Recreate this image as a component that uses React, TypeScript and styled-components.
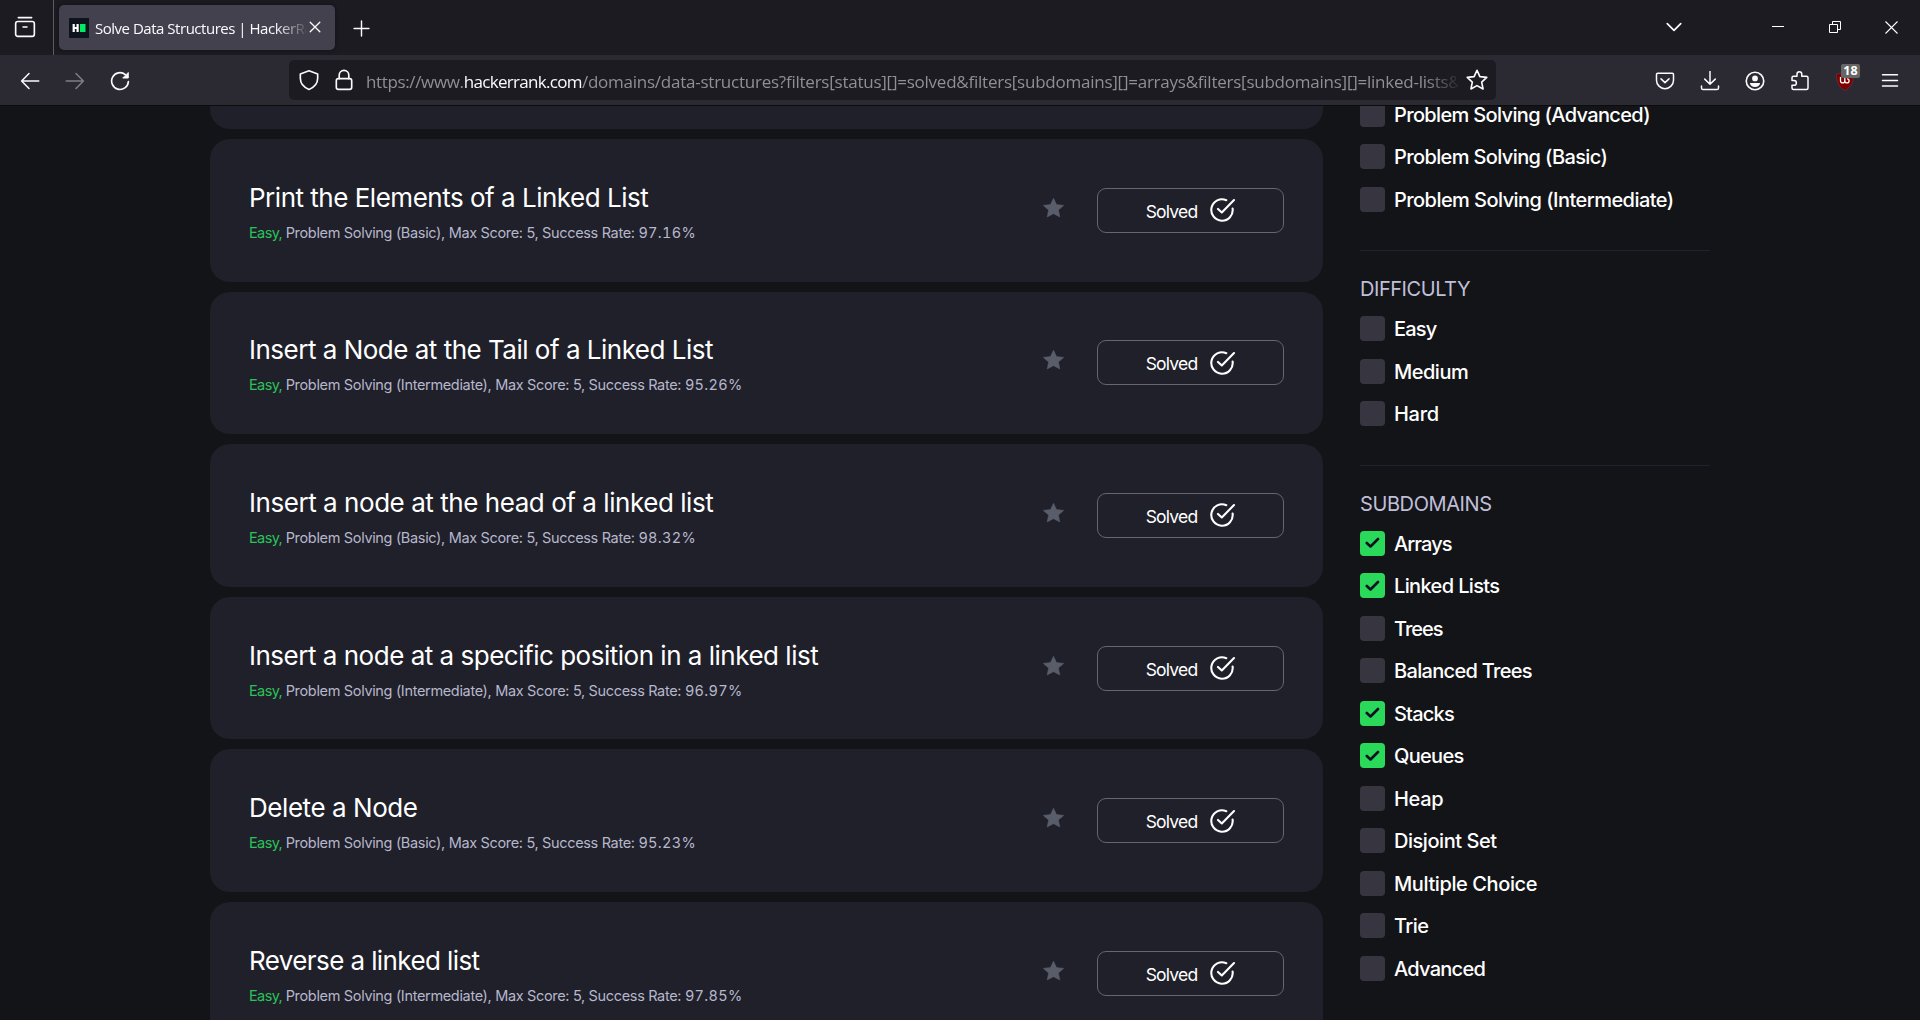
import React from "react";
import styled, { createGlobalStyle } from "styled-components";

const ui = `"Open Sans", "Noto Sans", sans-serif`;
const body = `Inter, "Liberation Sans", sans-serif`;

const GlobalStyle = createGlobalStyle`
  * { box-sizing: border-box; }
  body { margin: 0; background: #131418; overflow: hidden; }
`;

const Window = styled.div`
  width: 1920px;
  height: 1020px;
  display: flex;
  flex-direction: column;
  overflow: hidden;
  background: #131418;
  font-family: ${body};
`;

const TabBar = styled.div`
  height: 55px;
  flex: none;
  display: flex;
  background: #1c1b22;
  color: #fbfbfe;
`;

const ViewButton = styled.div`
  width: 54px;
  height: 55px;
  padding: 16px 0 0 14px;
  border-right: 1px solid #5c5b62;
`;

const Tab = styled.div`
  width: 276px;
  height: 45px;
  margin: 5px 0 0 5px;
  padding-left: 10px;
  display: flex;
  align-items: center;
  border-radius: 5px;
  background: #42414d;
  box-shadow: 0 0 4px rgba(0, 0, 0, 0.45);
`;

const TabTitle = styled.div`
  width: 211px;
  margin-left: 6px;
  overflow: hidden;
  white-space: nowrap;
  font: 400 15px/24px ${ui};
  letter-spacing: -0.48px;
  mask-image: linear-gradient(to right, #000 180px, transparent 214px);
`;

const TabClose = styled.div`
  display: flex;
  margin: -1px 0 0 2px;
`;

const NewTab = styled.div`
  margin: 20px 0 0 18px;
`;

const WindowButtons = styled.div`
  margin-left: auto;
  display: flex;
  align-items: flex-start;
  padding-top: 14px;
`;

const WindowButton = styled.div<{ $w: number }>`
  width: ${(p) => p.$w}px;
  height: 26px;
  display: flex;
  align-items: center;
  justify-content: center;
`;

const Toolbar = styled.div`
  height: 51px;
  flex: none;
  display: flex;
  padding: 0 8px 0 7px;
  background: #2b2a33;
  border-bottom: 1px solid #0c0c0d;
  color: #fbfbfe;
`;

const ToolButton = styled.div<{ $dim?: boolean }>`
  position: relative;
  width: 45px;
  height: 51px;
  display: flex;
  align-items: center;
  justify-content: center;
  opacity: ${(p) => (p.$dim ? 0.4 : 1)};
`;

const Badge = styled.span`
  position: absolute;
  left: 19px;
  top: 9px;
  width: 19px;
  height: 14px;
  border-radius: 2px;
  background: #666;
  color: #fff;
  font: 700 12.5px/13px ${ui};
  text-align: center;
`;

const UrlBar = styled.div`
  width: 1207px;
  height: 40px;
  margin: 5px auto 0 147px;
  padding: 0 8px 0 9px;
  display: flex;
  align-items: center;
  border-radius: 5px;
  background: #1c1b22;
`;

const UrlIcon = styled.div<{ $gap?: number }>`
  display: flex;
  margin-left: ${(p) => p.$gap ?? 0}px;
`;

const UrlText = styled.div`
  width: 1092px;
  margin: 3px 0 0 11px;
  overflow: hidden;
  white-space: nowrap;
  font: 400 17px/26px ${ui};
  letter-spacing: -0.24px;
  color: #8f8f95;
  mask-image: linear-gradient(to right, #000 1060px, transparent 1096px);
`;

const Scheme = styled.span`
  letter-spacing: -0.36px;
`;

const Host = styled.span`
  color: #fbfbfe;
  letter-spacing: -0.68px;
`;

const Page = styled.div`
  flex: 1;
  min-height: 0;
  display: flex;
  overflow: hidden;
`;

const List = styled.div`
  width: 1113px;
  flex: none;
  margin: -119.6px 0 0 210px;
  display: flex;
  flex-direction: column;
  gap: 10px;
`;

const Card = styled.div`
  height: 142.6px;
  flex: none;
  padding: 0 39px;
  display: flex;
  align-items: center;
  border-radius: 20px;
  background: #1f202a;
`;

const CardText = styled.div`
  flex: 1;
  padding-top: 4px;
`;

const CardTitle = styled.div<{ $t: number }>`
  color: #fff;
  font-size: 26px;
  font-weight: 430;
  line-height: 36px;
  letter-spacing: ${(p) => p.$t}px;
`;

const CardMeta = styled.div`
  margin-top: 5px;
  color: #b7b7cc;
  font-size: 14.5px;
  line-height: 24px;
  letter-spacing: -0.335px;
`;

const Level = styled.span`
  color: #2bc25a;
  letter-spacing: -0.6px;
`;

const Rate = styled.span`
  font-variant-numeric: tabular-nums;
  letter-spacing: 0.3px;
`;

const StarSlot = styled.div`
  display: flex;
  margin: -5px 32px 0 0;
`;

const SolvedButton = styled.div`
  width: 187px;
  height: 45px;
  padding-left: 1px;
  display: flex;
  align-items: center;
  justify-content: center;
  gap: 13px;
  border: 1px solid #656573;
  border-radius: 9px;
  color: #fff;
`;

const SolvedLabel = styled.span`
  padding-top: 2px;
  font-size: 17.5px;
  letter-spacing: -0.8px;
`;

const Sidebar = styled.div`
  width: 350px;
  margin: -13.2px 0 0 37px;
  flex: none;
`;

const Group = styled.div`
  padding-bottom: 30px;
  margin-bottom: 20px;
  border-bottom: 1px solid #1d2430;
  &:last-child { border: 0; }
`;

const GroupTitle = styled.div<{ $t: number }>`
  height: 36px;
  color: #c0bfd8;
  font-size: 20px;
  line-height: 36px;
  letter-spacing: ${(p) => p.$t}px;
`;

const Option = styled.div`
  height: 42.5px;
  display: flex;
  align-items: center;
  gap: 9px;
`;

const OptionLabel = styled.span<{ $t: number }>`
  padding-top: 1px;
  color: #fff;
  font-size: 20px;
  font-weight: 500;
  letter-spacing: ${(p) => p.$t}px;
`;

const Box = styled.div<{ $on?: boolean }>`
  width: 25px;
  height: 25px;
  display: flex;
  align-items: center;
  justify-content: center;
  border-radius: 4px;
  background: ${(p) => (p.$on ? "#2bd95a" : "#373640")};
`;

const Icon = ({ s = 20, w = 1.25, children }: { s?: number; w?: number; children: React.ReactNode }) => (
  <svg width={s} height={s} viewBox="0 0 16 16" fill="none" stroke="currentColor" strokeWidth={w} strokeLinecap="round" strokeLinejoin="round">
    {children}
  </svg>
);

const starPath = "M8 .9l2.1 4.6 5 .6-3.7 3.4 1 5L8 12.1l-4.4 2.4 1-5L.9 6.1l5-.6z";

type Problem = { title: string; skill: string; rate: string; t: number };
const problems: Problem[] = [
  { title: "Print the Elements of a Linked List", skill: "Basic", rate: "97.16%", t: -0.49 },
  { title: "Insert a Node at the Tail of a Linked List", skill: "Intermediate", rate: "95.26%", t: -0.5 },
  { title: "Insert a node at the head of a linked list", skill: "Basic", rate: "98.32%", t: -0.45 },
  { title: "Insert a node at a specific position in a linked list", skill: "Intermediate", rate: "96.97%", t: -0.49 },
  { title: "Delete a Node", skill: "Basic", rate: "95.23%", t: -0.44 },
  { title: "Reverse a linked list", skill: "Intermediate", rate: "97.85%", t: -0.6 },
];

type Opt = { label: string; on?: boolean; t: number };
type Section = { title?: string; t?: number; options: Opt[] };
const sections: Section[] = [
  {
    options: [
      { label: "Problem Solving (Advanced)", t: -0.65 },
      { label: "Problem Solving (Basic)", t: -0.62 },
      { label: "Problem Solving (Intermediate)", t: -0.55 },
    ],
  },
  {
    title: "DIFFICULTY",
    t: -0.45,
    options: [
      { label: "Easy", t: -0.8 },
      { label: "Medium", t: -0.5 },
      { label: "Hard", t: -0.3 },
    ],
  },
  {
    title: "SUBDOMAINS",
    t: -0.4,
    options: [
      { label: "Arrays", on: true, t: -0.93 },
      { label: "Linked Lists", on: true, t: -0.63 },
      { label: "Trees", t: -1 },
      { label: "Balanced Trees", t: -0.68 },
      { label: "Stacks", on: true, t: -0.8 },
      { label: "Queues", on: true, t: -0.7 },
      { label: "Heap", t: -0.3 },
      { label: "Disjoint Set", t: -0.46 },
      { label: "Multiple Choice", t: -0.4 },
      { label: "Trie", t: -0.55 },
      { label: "Advanced", t: -0.74 },
    ],
  },
];

export default function App() {
  return (
    <Window>
      <GlobalStyle />
      <TabBar>
        <ViewButton>
          <Icon s={22} w={1.2}>
            <path d="M3.2 1.2h9.6" />
            <rect x="1.2" y="4" width="13.6" height="10.8" rx="1.6" />
            <path d="M6.6 8h2.8" />
          </Icon>
        </ViewButton>
        <Tab>
          <svg width="20" height="20" viewBox="0 0 20 20">
            <rect width="20" height="20" fill="#0e141e" />
            <path d="M3.6 6h2.2v2.9h1.7V6h2.2v8H7.5v-2.9H5.8V14H3.6z" fill="#fff" />
            <rect x="11" y="6" width="5.5" height="8" fill="#00ea64" />
          </svg>
          <TabTitle>Solve Data Structures | HackerRa</TabTitle>
          <TabClose>
            <Icon s={14} w={1.5}><path d="M2.500 2.500l11 11M13.500 2.500l-11 11" /></Icon>
          </TabClose>
        </Tab>
        <NewTab>
          <Icon s={17} w={1.35}><path d="M8 1v14M1 8h14" /></Icon>
        </NewTab>
        <WindowButtons>
          <WindowButton $w={150}><Icon s={18} w={1.5}><path d="M2 5l6 6 6-6" /></Icon></WindowButton>
          <WindowButton $w={57}>
            <svg width="12" height="12" fill="none" stroke="#fff"><path d="M0 5.500h12" /></svg>
          </WindowButton>
          <WindowButton $w={57}>
            <svg width="12" height="12" fill="none" stroke="#fff"><path d="M.5 3.500h8v8h-8zM3.500 3.500v-3h8v8h-3" /></svg>
          </WindowButton>
          <WindowButton $w={57}>
            <svg width="13" height="13" fill="none" stroke="#fff" strokeWidth="1.1"><path d="M.5.5l12 12M12.500.5l-12 12" /></svg>
          </WindowButton>
        </WindowButtons>
      </TabBar>

      <Toolbar>
        <ToolButton><Icon w={1.2}><path d="M15 8H1.500M7.200 2L1.300 8l5.900 6" /></Icon></ToolButton>
        <ToolButton $dim><Icon w={1.2}><path d="M1 8h13.500M8.800 2L14.700 8l-5.900 6" /></Icon></ToolButton>
        <ToolButton>
          <Icon w={1.3}>
            <path d="M14.700 8.500a6.700 6.700 0 1 1-2.400-5.600" />
            <path d="M14.600 1.500v4.100h-4.100z" fill="currentColor" strokeWidth=".8" />
          </Icon>
        </ToolButton>
        <UrlBar>
          <UrlIcon>
            <Icon s={22} w={1.2}><path d="M8 1.300l6.300 2.300v3.200c0 3.500-2.300 6.500-6.300 8.100C4 13.300 1.700 10.300 1.700 6.800V3.600z" /></Icon>
          </UrlIcon>
          <UrlIcon $gap={13}>
            <Icon s={22} w={1.2}><rect x="2.400" y="7" width="11.200" height="7.800" rx="1.500" /><path d="M4.500 7V4.500a3.500 3.500 0 0 1 7 0V7" /></Icon>
          </UrlIcon>
          <UrlText>
            <Scheme>https://www.</Scheme><Host>hackerrank.com</Host>/domains/data-structures?filters[status][]=solved&amp;filters[subdomains][]=arrays&amp;filters[subdomains][]=linked-lists&amp;f
          </UrlText>
          <UrlIcon $gap={8}>
            <Icon s={22} w={1.2}><path d={starPath} /></Icon>
          </UrlIcon>
        </UrlBar>
        <ToolButton>
          <Icon w={1.2}><path d="M2.200 1.800h11.600c.6 0 1 .4 1 1V7.300a6.800 6.800 0 0 1-13.600 0V2.800c0-.6.4-1 1-1z" /><path d="M4.800 6.300L8 9.300l3.200-3" /></Icon>
        </ToolButton>
        <ToolButton>
          <Icon w={1.2}><path d="M8 .2v10.300M3.800 6.500L8 10.600l4.200-4.100M1.200 12v1.500c0 .9.600 1.300 1.300 1.300h11c.7 0 1.300-.4 1.300-1.300V12" /></Icon>
        </ToolButton>
        <ToolButton>
          <Icon w={1.3}><circle cx="8" cy="8" r="7" /><circle cx="8" cy="5.900" r="2.300" fill="currentColor" stroke="none" /><path d="M3.900 9.500h8.200c-.3 2-1.900 3.200-4.100 3.200S4.200 11.500 3.900 9.500z" fill="currentColor" stroke="none" /></Icon>
        </ToolButton>
        <ToolButton>
          <Icon w={1.2}><path d="M1.600 5.400c0-.7.500-1.200 1.200-1.200h2.800V2.500a1.900 1.900 0 0 1 3.800 0v1.700h3.800c.7 0 1.200.5 1.200 1.200v8.200c0 .7-.5 1.200-1.200 1.200H2.800c-.7 0-1.200-.5-1.200-1.200v-2.200h1.600a1.900 1.900 0 0 0 0-3.800H1.600z" /></Icon>
        </ToolButton>
        <ToolButton>
          <svg width="20" height="20" viewBox="0 0 20 20" fill="none">
            <path d="M10 .5c2.500 1.700 5.500 2 8.500 2.200 0 8-1.500 12.800-8.500 16.800C3 15.500 1.500 10.700 1.500 2.700 4.500 2.500 7.500 2.200 10 .5z" fill="#800000" stroke="#5c4048" strokeWidth=".6" />
            <path d="M5.500 6v3.800a2 2 0 0 0 4.300 0V7v2.800a2 2 0 0 0 4.300 0 2 2 0 0 0-2-2" stroke="#fff" strokeWidth="1.3" />
          </svg>
          <Badge>18</Badge>
        </ToolButton>
        <ToolButton><Icon w={1.2}><path d="M2 3h12M2 7.500h12M2 12h12" /></Icon></ToolButton>
      </Toolbar>

      <Page>
        <List>
          <Card />
          {problems.map((p) => (
            <Card key={p.title}>
              <CardText>
                <CardTitle $t={p.t}>{p.title}</CardTitle>
                <CardMeta>
                  <Level>Easy, </Level>
                  {`Problem Solving (${p.skill}), Max Score: 5, Success Rate: `}
                  <Rate>{p.rate}</Rate>
                </CardMeta>
              </CardText>
              <StarSlot>
                <svg width="23" height="22" viewBox="0 0 16 16" preserveAspectRatio="none"><path d={starPath} fill="#595d69" stroke="#595d69" strokeWidth=".4" /></svg>
              </StarSlot>
              <SolvedButton>
                <SolvedLabel>Solved</SolvedLabel>
                <svg width="26" height="24" viewBox="0 0 26 24" fill="none" stroke="#fff" strokeWidth="2.1" strokeLinecap="round" strokeLinejoin="round">
                  <path d="M16.300 2.200A10.700 10.700 0 1 0 22.600 10.500M24 2L11.800 14.500 8 10.900" />
                </svg>
              </SolvedButton>
            </Card>
          ))}
        </List>
        <Sidebar>
          {sections.map((s, i) => (
            <Group key={i}>
              {s.title && <GroupTitle $t={s.t ?? 0}>{s.title}</GroupTitle>}
              {s.options.map((o) => (
                <Option key={o.label}>
                  <Box $on={o.on}>
                    {o.on && (
                      <svg width="15" height="12" viewBox="0 0 15 12" fill="none" stroke="#0b1020" strokeWidth="2.6" strokeLinecap="round" strokeLinejoin="round">
                        <path d="M1.800 6l3.700 3.500 7.500-7.500" />
                      </svg>
                    )}
                  </Box>
                  <OptionLabel $t={o.t}>{o.label}</OptionLabel>
                </Option>
              ))}
            </Group>
          ))}
        </Sidebar>
      </Page>
    </Window>
  );
}
